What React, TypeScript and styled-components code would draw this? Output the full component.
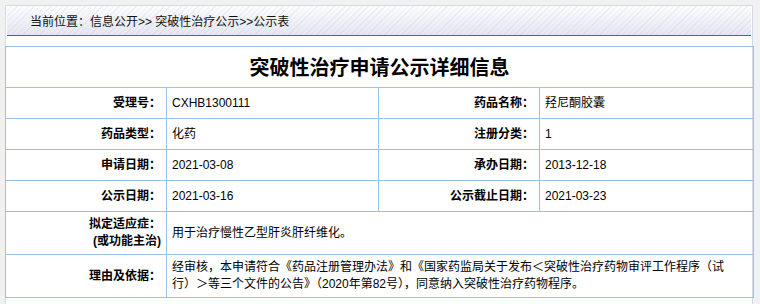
import React from 'react';
import styled, { createGlobalStyle } from 'styled-components';

const GlobalStyle = createGlobalStyle`
  html, body { margin: 0; padding: 0; background: #f1f1f1; }
  body {
    font-family: "Liberation Sans", "Noto Sans CJK SC", sans-serif;
    font-size: 12px;
    color: #000;
  }
`;

const Page = styled.div`
  padding: 5px 0 0 5px;
`;

const Panel = styled.div`
  width: 748px;
  box-sizing: border-box;
  background: #fff;
  border: 1px solid #d3dbe7;
  border-bottom: none;
  padding-bottom: 10px;
`;

const Crumb = styled.div`
  height: 29px;
  margin: 0 1px 10px;
  border-bottom: 1px solid #4e6499;
  background:
    repeating-linear-gradient(135deg, rgba(255,255,255,0) 0 3px, rgba(180,192,215,0.22) 3px 4px),
    linear-gradient(#fdfdfe, #e3e7f1);
  display: flex;
  align-items: center;
  padding-left: 23px;
  font-size: 12px;
  color: #111;
`;

const Table = styled.table`
  width: 748px;
  margin: 0 -1px;
  border-collapse: collapse;
  table-layout: fixed;
`;

const Col = styled.col<{ $w: number }>`
  width: ${p => p.$w}px;
`;

const Row = styled.tr<{ $h: number }>`
  height: ${p => p.$h}px;
`;

const TitleCell = styled.td`
  border: 1px solid #9bc2e4;
  padding: 0;
  text-align: center;
  vertical-align: middle;
  font-family: "Noto Sans CJK SC", sans-serif;
  font-size: 20px;
  font-weight: bold;
  line-height: 26px;
`;

const Label = styled.td`
  border: 1px solid #9bc2e4;
  padding: 0 5px;
  text-align: right;
  vertical-align: middle;
  font-weight: bold;
  line-height: 17px;
`;

const Value = styled.td`
  border: 1px solid #9bc2e4;
  padding: 0 5px;
  text-align: left;
  vertical-align: middle;
  line-height: 17px;
`;

type Pair = [string, string];

const pairs: [Pair, Pair][] = [
  [['受理号：', 'CXHB1300111'], ['药品名称：', '羟尼酮胶囊']],
  [['药品类型：', '化药'], ['注册分类：', '1']],
  [['申请日期：', '2021-03-08'], ['承办日期：', '2013-12-18']],
  [['公示日期：', '2021-03-16'], ['公示截止日期：', '2021-03-23']],
];

export default function App() {
  return (
    <>
      <GlobalStyle />
      <Page>
        <Panel>
          <Crumb>当前位置：信息公开&gt;&gt; 突破性治疗公示&gt;&gt;公示表</Crumb>
          <Table>
            <colgroup>
              <Col $w={161} />
              <Col $w={212} />
              <Col $w={161} />
              <Col $w={214} />
            </colgroup>
            <tbody>
              <Row $h={41}>
                <TitleCell colSpan={4}>突破性治疗申请公示详细信息</TitleCell>
              </Row>
              {pairs.map(([a, b], i) => (
                <Row $h={31} key={i}>
                  <Label>{a[0]}</Label>
                  <Value>{a[1]}</Value>
                  <Label>{b[0]}</Label>
                  <Value>{b[1]}</Value>
                </Row>
              ))}
              <Row $h={43}>
                <Label>
                  拟定适应症：
                  <br />
                  (或功能主治)
                </Label>
                <Value colSpan={3}>用于治疗慢性乙型肝炎肝纤维化。</Value>
              </Row>
              <Row $h={43}>
                <Label>理由及依据：</Label>
                <Value colSpan={3}>
                  经审核，本申请符合《药品注册管理办法》和《国家药监局关于发布＜突破性治疗药物审评工作程序（试
                  <br />
                  行）＞等三个文件的公告》（2020年第82号），同意纳入突破性治疗药物程序。
                </Value>
              </Row>
            </tbody>
          </Table>
        </Panel>
      </Page>
    </>
  );
}
